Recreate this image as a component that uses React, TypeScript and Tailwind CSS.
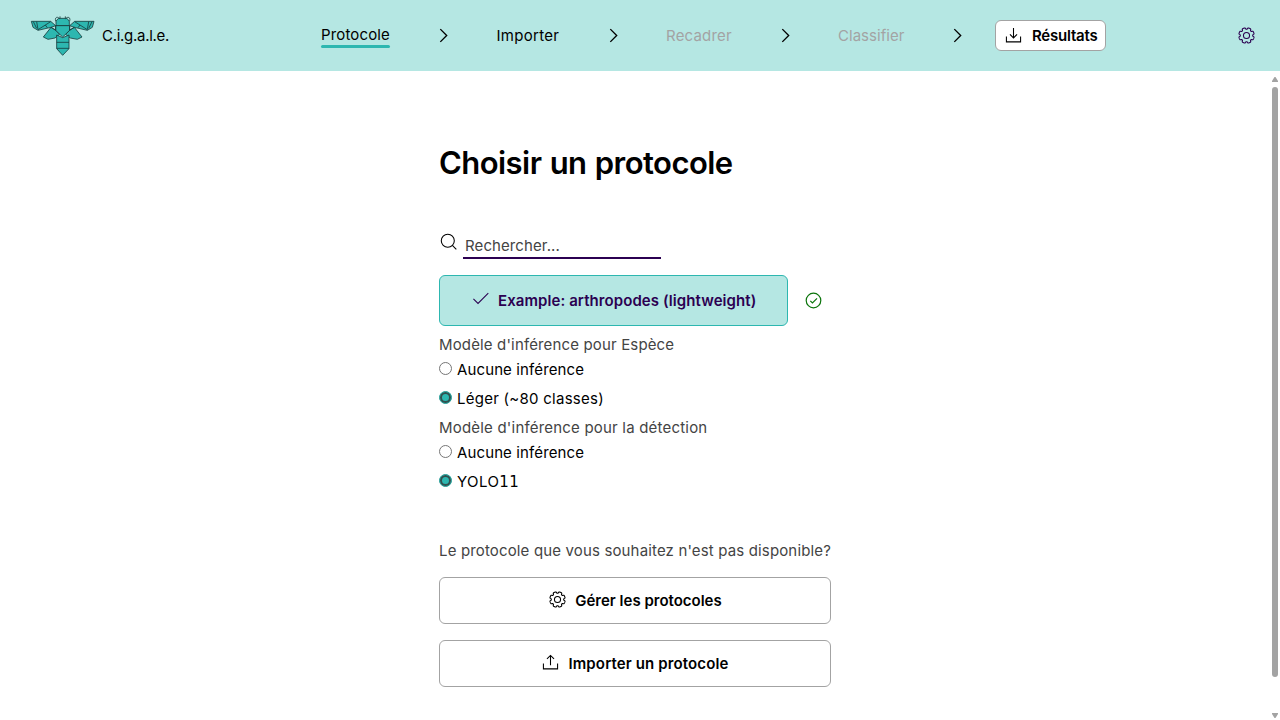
import type { ReactNode } from "react";

const GEAR_PATH =
  Array.from({ length: 160 }, (_, i) => {
    const a = (i / 160) * Math.PI * 2;
    const r = 9.8 - 1.15 * Math.tanh(3 * Math.cos(8 * a) - 1.2);
    return `${i ? "L" : "M"}${(12 + r * Math.cos(a)).toFixed(2)} ${(12 + r * Math.sin(a)).toFixed(2)}`;
  }).join("") + "Z";

function Icon({ children, className = "" }: { children: ReactNode; className?: string }) {
  return (
    <svg
      viewBox="0 0 24 24"
      fill="none"
      stroke="currentColor"
      strokeWidth="1.5"
      className={`size-[17px] shrink-0 ${className}`}
    >
      {children}
    </svg>
  );
}

const Gear = ({ className = "" }: { className?: string }) => (
  <Icon className={className}>
    <path d={GEAR_PATH} />
    <circle cx="12" cy="12" r="4.3" />
  </Icon>
);

const Chevron = () => (
  <Icon>
    <path d="M7.5 3 16.5 12l-9 9" strokeWidth="1.9" />
  </Icon>
);

function Logo() {
  return (
    <svg viewBox="30 30 198 126" className="h-[42px] w-[66px] shrink-0" fill="#2db7b0" stroke="#15383a" strokeWidth="2.4" strokeLinejoin="round">
      <path d="M93 67 70 96 84 103 105 99 119 88 107 75Z" />
      <path d="M163 67 186 96 172 103 151 99 137 88 149 75Z" />
      <path d="M34 49H92L107 62 93 67 54 76 39 67Z" />
      <path d="M222 49H164L149 62 163 67 202 76 217 67Z" />
      <path d="M110 90 128 98 147 90V131L128 151 110 131Z" />
      <path d="M108 50Q108 46 116 40H140Q148 46 148 50V62H108Z" />
      <path d="M107 62H149V76L128 96 107 76Z" />
      <path
        fill="none"
        d="M50 50 54 74 92 50M40 50 50 70M76 60 82 68M206 50 202 74 164 50M216 50 206 70M180 60 174 68M107 62V76L93 67M149 62V76L163 67M110 112H147M110 130H147M107 49Q104 36 113 37L119 41M149 49Q152 36 143 37L137 41M120 34V40M136 34V40"
      />
    </svg>
  );
}

function Radio({ checked, children }: { checked?: boolean; children: ReactNode }) {
  return (
    <label className="flex h-[29px] items-center">
      <span
        className={
          checked
            ? "mt-[-3px] mr-[5px] size-[13px] rounded-full border border-[#279c96] bg-[#2db7b0] shadow-[inset_0_0_0_2px_#33504f]"
            : "mt-[-3px] mr-[5px] size-[13px] rounded-full border border-[#767676] bg-white"
        }
      />
      <span className="pt-px">{children}</span>
    </label>
  );
}

const Sep = () => (
  <span className="flex w-[106px] justify-center">
    <Chevron />
  </span>
);

export default function App() {
  return (
    <div className="flex h-screen flex-col overflow-hidden bg-white font-['Inter',sans-serif] text-[15px] whitespace-nowrap text-black">
      <header className="flex h-[71px] shrink-0 items-center bg-[#b5e7e3] pr-[25px] pl-[30px]">
        <div className="flex w-[291px] items-center gap-[6px]">
          <Logo />
          <span className="pt-px tracking-[-0.29px]">C.i.g.a.l.e.</span>
        </div>
        <nav className="flex items-center">
          <a className="flex w-[69px] flex-col pt-px leading-[21px] tracking-[0.14px]">
            Protocole
            <span className="h-[3px] rounded-full bg-[#2db7b0]" />
          </a>
          <Sep />
          <a className="w-[64px] pt-px pl-[0.5px] tracking-[0.3px]">Importer</a>
          <Sep />
          <a className="w-[66px] pt-px tracking-[0.2px] text-[#a3a3a3]">Recadrer</a>
          <Sep />
          <a className="w-[66px] pt-px tracking-[0.03px] text-[#a3a3a3]">Classifier</a>
          <span className="flex w-[91px] justify-center pl-[16px]">
            <Chevron />
          </span>
          <button className="flex h-[31px] w-[111px] items-center rounded-md border border-[#a3a3a3] bg-white pl-[9px] font-semibold tracking-[-0.22px]">
            <Icon className="mr-[10px]">
              <path d="M2 13.5V21h20v-7.5M12 1.5V15M7 10.5l5 5 5-5" />
            </Icon>
            <span className="pt-px">Résultats</span>
          </button>
        </nav>
        <Gear className="ml-auto text-[#2b0051]" />
      </header>

      <div className="flex min-h-0 flex-1">
        <main className="flex flex-1 flex-col pt-[72px] pl-[439px]">
          <h1 className="h-10 text-[31px] leading-10 font-semibold tracking-[-0.55px] [word-spacing:1px]">Choisir un protocole</h1>

          <div className="mt-[49px] flex h-[27px] w-[222px] gap-[6px]">
            <Icon className="mt-px ml-px">
              <circle cx="11" cy="11" r="9.2" />
              <path d="m17.5 17.5 5.5 5.5" />
            </Icon>
            <div className="h-[27px] flex-1 border-b-2 border-[#2b0051] pl-[2px] leading-[27px] tracking-[0.1px] text-[#444]">
              Rechercher...
            </div>
          </div>

          <div className="mt-4 flex items-center gap-[17px]">
            <button className="flex h-[51px] w-[349px] items-center rounded-md border border-[#2db7b0] bg-[#b5e7e3] pl-[32px] font-semibold tracking-[0.08px] text-[#2b0051]">
              <Icon className="mt-[-4px] mr-[9px]">
                <path d="M2 12.5 8.5 19 23 4.5" />
              </Icon>
              <span className="pt-px">Example: arthropodes (lightweight)</span>
            </button>
            <Icon className="mt-[-1px] text-[#0b740b]">
              <circle cx="12" cy="12" r="10.3" strokeWidth="1.7" />
              <path d="m7.5 12.5 3 3 6.5-6.5" strokeWidth="1.7" />
            </Icon>
          </div>

          <section className="mt-[7px]">
            <p className="h-[22px] leading-[24px] tracking-[0.15px] text-[#444]">Modèle d'inférence pour Espèce</p>
            <Radio><span className="tracking-[0.12px]">Aucune inférence</span></Radio>
            <Radio checked><span className="tracking-[0.26px]">Léger (~80 classes)</span></Radio>
          </section>
          <section className="mt-[3px]">
            <p className="h-[22px] leading-[24px] tracking-[0.2px] text-[#444]">Modèle d'inférence pour la détection</p>
            <Radio><span className="tracking-[0.12px]">Aucune inférence</span></Radio>
            <Radio checked>
              <span className="tracking-[0.4px]">YOLO<span className="font-['DejaVu_Sans',sans-serif] leading-none">11</span></span>
            </Radio>
          </section>

          <p className="mt-[43px] h-6 leading-6 tracking-[0.15px] text-[#444]">
            Le protocole que vous souhaitez n'est pas disponible?
          </p>
          <button className="mt-[14px] flex h-[47px] w-[392px] shrink-0 items-center justify-center gap-[9px] rounded-md border border-[#a3a3a3] pl-px font-semibold">
            <Gear className="mt-[-2px]" />
            <span className="pt-px">Gérer les protocoles</span>
          </button>
          <button className="mt-4 flex h-[47px] w-[392px] shrink-0 items-center justify-center gap-[9px] rounded-md border border-[#a3a3a3] pl-px font-semibold tracking-[0.13px]">
            <Icon className="mt-[-3px]">
              <path d="M2 13.5V21h20v-7.5M12 16V2M7 7l5-5 5 5" />
            </Icon>
            <span className="pt-px">Importer un protocole</span>
          </button>
        </main>
        <div className="flex w-[10px] flex-col items-center pt-[6px] pb-[2px]">
          <svg viewBox="0 0 6 5" className="h-[5px] w-[6px]" fill="#a3a3a3"><path d="M2.5 0H3.5L6 4V5H0V4Z" /></svg>
          <div className="mt-[5px] h-[590px] w-[6px] rounded-full bg-[#a3a3a3]" />
          <svg viewBox="0 0 6 5" className="mt-auto h-[5px] w-[6px]" fill="#a3a3a3"><path d="M0 0H6V1L3.5 5H2.5L0 1Z" /></svg>
        </div>
      </div>
    </div>
  );
}
